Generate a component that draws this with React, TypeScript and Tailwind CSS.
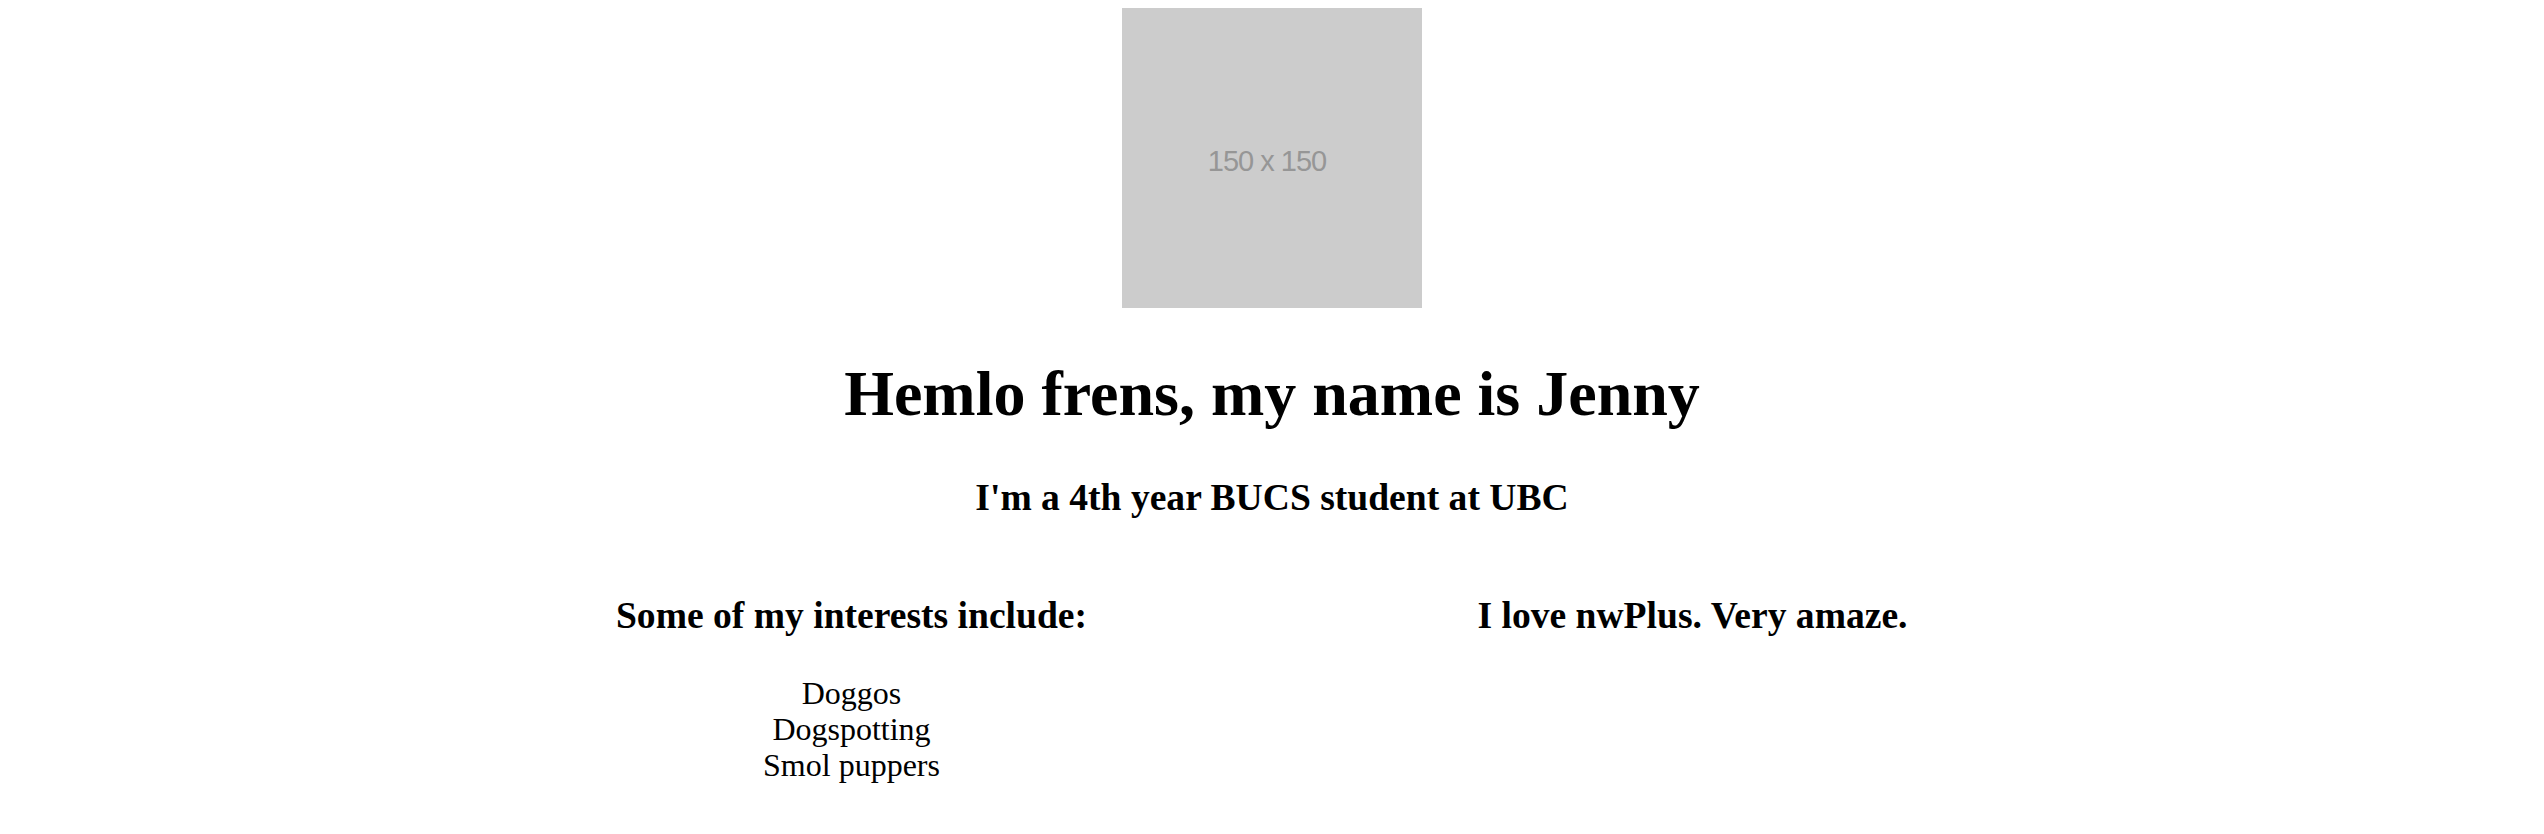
export default function App() {
  const interests = ['Doggos', 'Dogspotting', 'Smol puppers'];

  return (
    <div className="min-h-screen bg-white pt-2 text-black font-['Liberation_Serif',serif]">
      {/* placeholder avatar */}
      <div className="mx-auto flex h-[300px] w-[300px] items-center justify-center bg-[#cccccc]">
        <span className="mt-[6px] mr-[10px] text-[29px] leading-none text-[#969696] font-['Liberation_Sans',Arial,sans-serif] -tracking-[1px]">
          150 x 150
        </span>
      </div>

      <h1 className="mt-[54px] text-center text-[64px] font-bold leading-none">Hemlo frens, my name is Jenny</h1>
      <h2 className="mt-[53px] text-center text-[37.6px] font-bold leading-none">I'm a 4th year BUCS student at UBC</h2>

      <div className="mx-auto mt-[80px] flex w-[1682px]">
        <div className="flex flex-1 flex-col items-center text-center">
          <h3 className="text-[37.6px] font-bold leading-none">Some of my interests include:</h3>
          <ul className="mt-[41px] text-[32px] leading-[36px]">
            {interests.map((item) => (
              <li key={item}>{item}</li>
            ))}
          </ul>
        </div>
        <div className="flex flex-1 flex-col items-center text-center">
          <h3 className="text-[37.6px] font-bold leading-none">I love nwPlus. Very amaze.</h3>
        </div>
      </div>
    </div>
  );
}
